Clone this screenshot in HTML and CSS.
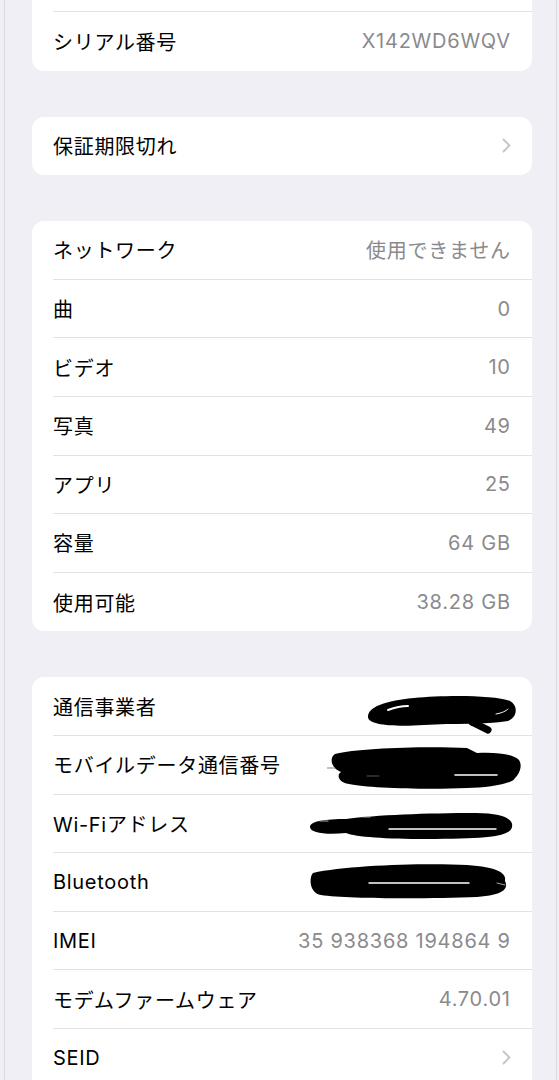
FILE: index.html
```html
<!DOCTYPE html>
<html lang="ja">

<head>
  <meta charset="UTF-8" />
  <title>情報</title>
  <link rel="stylesheet" href="styles.css">
</head>

<body>
  <div class="frame">
    <section class="group group-first">
      <div class="row"><div class="row-inner"></div></div>
      <div class="row">
        <div class="row-inner">
          <span class="label">シリアル番号</span>
          <span class="value">X142WD6WQV</span>
        </div>
      </div>
    </section>

    <section class="group">
      <div class="row">
        <div class="row-inner">
          <span class="label">保証期限切れ</span>
          <svg class="chevron" width="9" height="15" viewBox="0 0 9 15"><polyline points="1.5,1.5 7.5,7.5 1.5,13.5" fill="none" stroke="#c4c4c7" stroke-width="1.8" stroke-linecap="round" stroke-linejoin="round"/></svg>
        </div>
      </div>
    </section>

    <section class="group">
      <div class="row"><div class="row-inner"><span class="label">ネットワーク</span><span class="value">使用できません</span></div></div>
      <div class="row"><div class="row-inner"><span class="label">曲</span><span class="value">0</span></div></div>
      <div class="row"><div class="row-inner"><span class="label">ビデオ</span><span class="value">10</span></div></div>
      <div class="row"><div class="row-inner"><span class="label">写真</span><span class="value">49</span></div></div>
      <div class="row"><div class="row-inner"><span class="label">アプリ</span><span class="value">25</span></div></div>
      <div class="row"><div class="row-inner"><span class="label">容量</span><span class="value">64 GB</span></div></div>
      <div class="row"><div class="row-inner"><span class="label">使用可能</span><span class="value">38.28 GB</span></div></div>
    </section>

    <section class="group">
      <div class="row">
        <div class="row-inner">
          <span class="label">通信事業者</span>
          <!-- 塗りつぶし（個人情報） -->
          <svg class="scribble s1" width="152" height="42" viewBox="0 0 152 42">
            <path d="M4 24 C4 14 20 8 50 5 C80 2 130 2 146 8 C154 12 154 24 144 28 C120 32 90 30 60 32 C30 34 4 32 4 24 Z" fill="#000"/>
            <path d="M108 29 L124 37" stroke="#000" stroke-width="7" stroke-linecap="round"/>
            <path d="M24 17 C32 14 38 13 44 13" stroke="#fff" stroke-width="2" stroke-linecap="round" fill="none"/>
            <path d="M132 21 C138 20 142 18 144 16" stroke="#fff" stroke-width="1" stroke-linecap="round" fill="none"/>
          </svg>
        </div>
      </div>
      <div class="row">
        <div class="row-inner">
          <span class="label">モバイルデータ通信番号</span>
          <svg class="scribble s2" width="196" height="47" viewBox="0 0 196 47">
            <path d="M8 10 C30 4 100 2 140 4 L150 9 C170 8 186 10 192 16 C196 22 192 30 188 34 C186 40 160 44 140 44 C100 46 40 44 22 40 C10 38 10 30 14 28 C4 24 2 14 8 10 Z" fill="#000"/>
            <path d="M0 24 L8 24" stroke="#999" stroke-width="1.2"/>
            <path d="M128 31 L170 31" stroke="#fff" stroke-width="1.5" stroke-linecap="round"/>
            <path d="M40 32 L52 32" stroke="#555" stroke-width="1" stroke-linecap="round"/>
          </svg>
        </div>
      </div>
      <div class="row">
        <div class="row-inner">
          <span class="label">Wi-Fiアドレス</span>
          <svg class="scribble s3" width="210" height="30" viewBox="0 0 210 30">
            <path d="M4 16 C4 10 20 8 40 8 C70 4 120 2 170 2 C196 2 208 8 206 16 C204 26 180 28 120 28 C80 28 50 26 40 22 C20 24 4 22 4 16 Z" fill="#000"/>
            <path d="M83 18 L190 18" stroke="#fff" stroke-width="1.3" stroke-linecap="round"/>
            <path d="M14 10 L22 10 M58 6 L64 6" stroke="#aaa" stroke-width="1.2" stroke-linecap="round"/>
          </svg>
        </div>
      </div>
      <div class="row">
        <div class="row-inner">
          <span class="label">Bluetooth</span>
          <svg class="scribble s4" width="204" height="39" viewBox="0 0 204 39">
            <path d="M6 12 C40 4 120 2 160 4 C190 6 200 12 198 20 C202 28 196 34 170 36 C120 38 40 38 14 34 C2 32 2 16 6 12 Z" fill="#000"/>
            <path d="M62 22 L162 22" stroke="#fff" stroke-width="1.3" stroke-linecap="round"/>
            <path d="M190 22 L198 24" stroke="#999" stroke-width="1.2" stroke-linecap="round"/>
          </svg>
        </div>
      </div>
      <div class="row"><div class="row-inner"><span class="label">IMEI</span><span class="value">35 938368 194864 9</span></div></div>
      <div class="row"><div class="row-inner"><span class="label">モデムファームウェア</span><span class="value">4.70.01</span></div></div>
      <div class="row">
        <div class="row-inner">
          <span class="label">SEID</span>
          <svg class="chevron" width="9" height="15" viewBox="0 0 9 15"><polyline points="1.5,1.5 7.5,7.5 1.5,13.5" fill="none" stroke="#c4c4c7" stroke-width="1.8" stroke-linecap="round" stroke-linejoin="round"/></svg>
        </div>
      </div>
      <div class="row"><div class="row-inner"></div></div>
    </section>
  </div>
</body>

</html>
```

FILE: styles.css
```css
html,
body {
  margin: 0;
  padding: 0;
  background: #f0eff5;
}

body {
  font-family: Inter, "Noto Sans CJK JP", sans-serif;
  color: #000;
  overflow: hidden;
  height: 1080px;
}

.frame {
  margin-left: 4px;
  width: 553px;
  min-height: 1080px;
  border-left: 1px solid #d7d7dd;
  border-right: 1px solid #d7d7dd;
  padding: 0 24px 0 27px;
  box-sizing: border-box;
}

.group {
  background: #fff;
  border-radius: 12px;
  margin-top: 46px;
  overflow: hidden;
}

.group-first {
  margin-top: -46.6px;
}

.row {
  padding-left: 21px;
}

.row-inner {
  height: 58.6px;
  box-sizing: border-box;
  display: flex;
  align-items: center;
  justify-content: space-between;
  padding-right: 22px;
  border-bottom: 1px solid #e2e2e6;
}

.row:last-child .row-inner {
  border-bottom: none;
}

.label {
  font-size: 20px;
  letter-spacing: 0.7px;
}

.value {
  font-size: 20px;
  color: #8a8a8e;
  letter-spacing: 0.75px;
  margin-right: -0.75px;
}

.chevron {
  display: block;
  margin-right: -1px;
}

.scribble {
  display: block;
}

.s1 {
  margin-right: -6px;
  margin-top: 16px;
}

.s2 {
  margin-right: -13px;
  margin-top: 6px;
}

.s3 {
  margin-right: -6px;
  margin-top: 5px;
}

.s4 {
  margin-right: -1px;
  margin-bottom: 2px;
}
```
